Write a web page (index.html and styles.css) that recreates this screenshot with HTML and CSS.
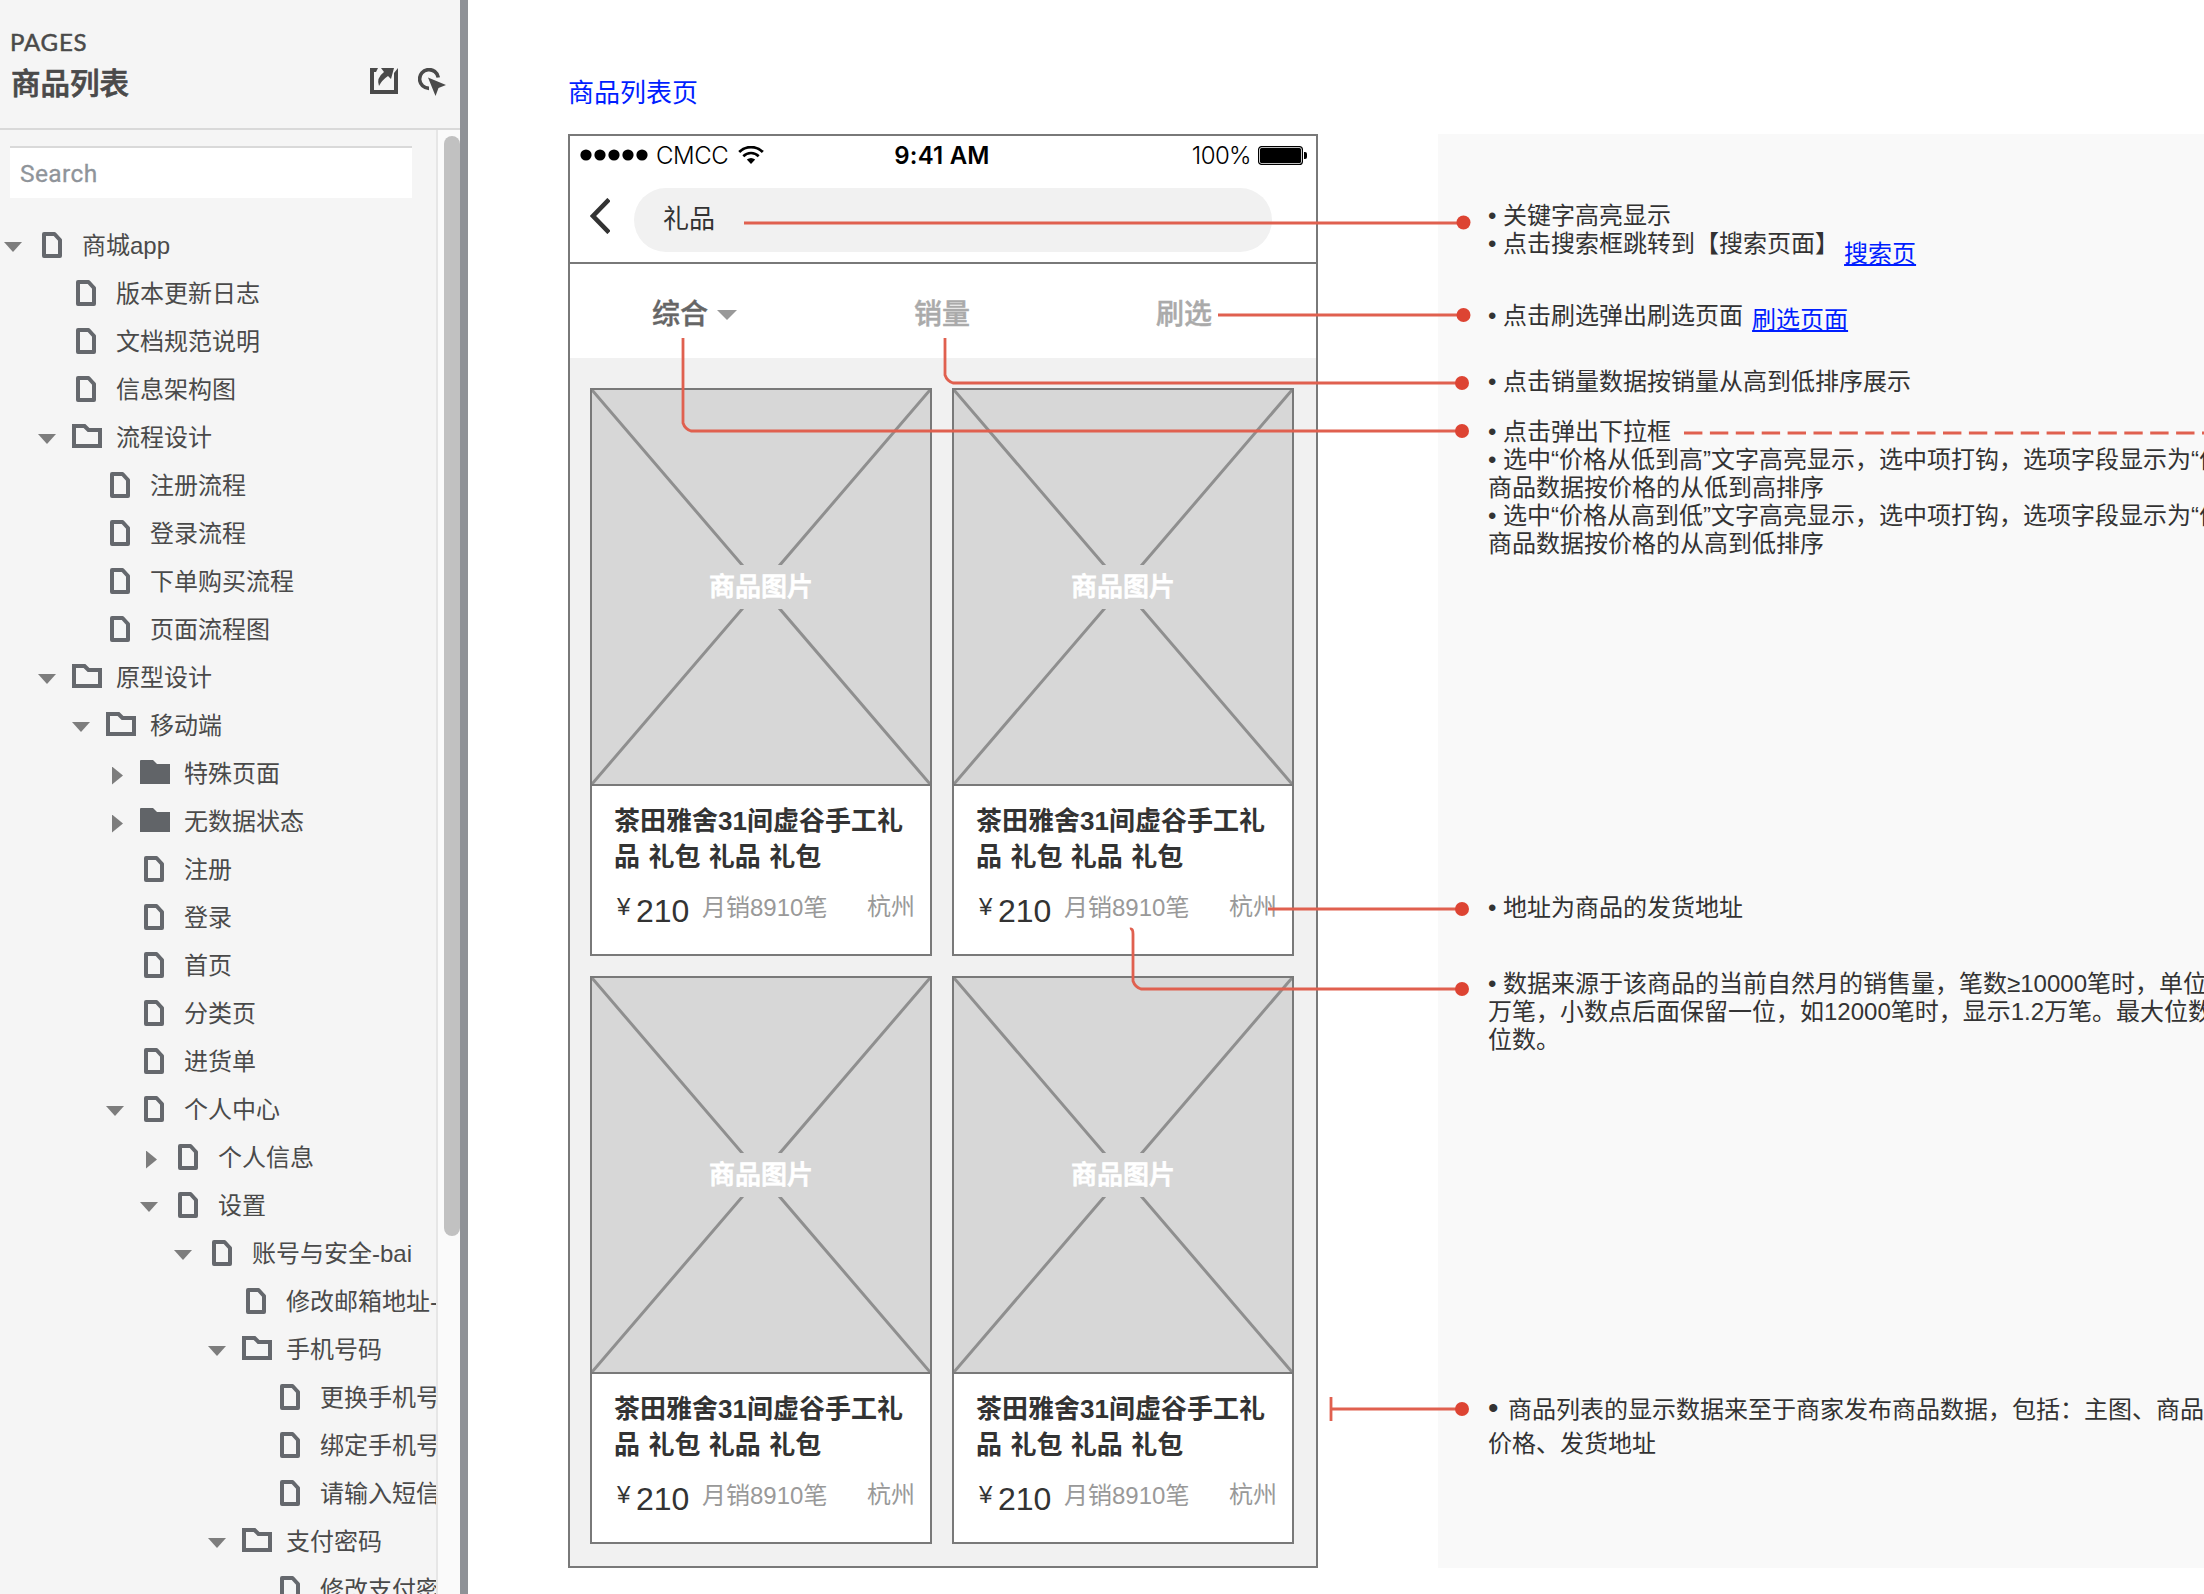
FILE: index.html
```
<!DOCTYPE html>
<html lang="zh-CN">
  <head>
    <meta charset="UTF-8" />
    <meta name="viewport" content="width=device-width, initial-scale=1.0" />
    <title>商品列表</title>
    <link rel="stylesheet" href="styles.css">
  </head>
  <body>
    <!-- Shared icons -->
    <svg class="sprite" width="0" height="0">
      <symbol id="file" viewBox="0 0 20 26">
        <path d="M2 2H12.5L18 8V24H2Z" fill="none" stroke="#65686d" stroke-width="4" stroke-linejoin="round" />
      </symbol>
      <symbol id="folder" viewBox="0 0 30 24">
        <path d="M2 2H12.5L16.5 6H28V22H2Z" fill="none" stroke="#65686d" stroke-width="4" />
      </symbol>
      <symbol id="folder-closed" viewBox="0 0 30 24">
        <path d="M0 1Q0 0 1 0H13L17 4H30V24H0Z" fill="#616468" />
      </symbol>
      <symbol id="cross" viewBox="0 0 338 394">
        <path d="M0 0L338 394M338 0L0 394" stroke="#8f8f8f" stroke-width="3" />
      </symbol>
    </svg>

    <aside class="sidebar">
      <header class="sidebar-header">
        <div>
          <div class="sidebar-label">PAGES</div>
          <h1>商品列表</h1>
        </div>
        <div class="sidebar-actions">
          <svg width="28" height="26" viewBox="0 0 28 26">
            <path d="M8 0H0V26H28V0L24 5V22H4V4H6Z" fill="#4a4a4a" />
            <path d="M11 0H24L21 11L18 8Q12 12 9 18Q6 10 14 4Z" fill="#4a4a4a" />
          </svg>
          <svg width="28" height="28" viewBox="0 0 28 28">
            <path d="M20.3 9.5A9.4 9.4 0 1 0 11 20.4" fill="none" stroke="#4a4a4a" stroke-width="3.6" />
            <path d="M10 9.5L28 17L20.5 20L17.5 28Z" fill="#4a4a4a" />
          </svg>
        </div>
      </header>

      <div class="sidebar-body">
        <div class="sidebar-scroll">
          <div class="search">Search</div>

          <ul class="tree">
            <li>
              <div class="row"><i class="arrow open"></i><svg class="file"><use href="#file" /></svg>商城app</div>
              <ul>
                <li><div class="row"><i class="arrow"></i><svg class="file"><use href="#file" /></svg>版本更新日志</div></li>
                <li><div class="row"><i class="arrow"></i><svg class="file"><use href="#file" /></svg>文档规范说明</div></li>
                <li><div class="row"><i class="arrow"></i><svg class="file"><use href="#file" /></svg>信息架构图</div></li>
                <li>
                  <div class="row"><i class="arrow open"></i><svg class="folder"><use href="#folder" /></svg>流程设计</div>
                  <ul>
                    <li><div class="row"><i class="arrow"></i><svg class="file"><use href="#file" /></svg>注册流程</div></li>
                    <li><div class="row"><i class="arrow"></i><svg class="file"><use href="#file" /></svg>登录流程</div></li>
                    <li><div class="row"><i class="arrow"></i><svg class="file"><use href="#file" /></svg>下单购买流程</div></li>
                    <li><div class="row"><i class="arrow"></i><svg class="file"><use href="#file" /></svg>页面流程图</div></li>
                  </ul>
                </li>
                <li>
                  <div class="row"><i class="arrow open"></i><svg class="folder"><use href="#folder" /></svg>原型设计</div>
                  <ul>
                    <li>
                      <div class="row"><i class="arrow open"></i><svg class="folder"><use href="#folder" /></svg>移动端</div>
                      <ul>
                        <li><div class="row"><i class="arrow closed"></i><svg class="folder"><use href="#folder-closed" /></svg>特殊页面</div></li>
                        <li><div class="row"><i class="arrow closed"></i><svg class="folder"><use href="#folder-closed" /></svg>无数据状态</div></li>
                        <li><div class="row"><i class="arrow"></i><svg class="file"><use href="#file" /></svg>注册</div></li>
                        <li><div class="row"><i class="arrow"></i><svg class="file"><use href="#file" /></svg>登录</div></li>
                        <li><div class="row"><i class="arrow"></i><svg class="file"><use href="#file" /></svg>首页</div></li>
                        <li><div class="row"><i class="arrow"></i><svg class="file"><use href="#file" /></svg>分类页</div></li>
                        <li><div class="row"><i class="arrow"></i><svg class="file"><use href="#file" /></svg>进货单</div></li>
                        <li>
                          <div class="row"><i class="arrow open"></i><svg class="file"><use href="#file" /></svg>个人中心</div>
                          <ul>
                            <li><div class="row"><i class="arrow closed"></i><svg class="file"><use href="#file" /></svg>个人信息</div></li>
                            <li>
                              <div class="row"><i class="arrow open"></i><svg class="file"><use href="#file" /></svg>设置</div>
                              <ul>
                                <li>
                                  <div class="row"><i class="arrow open"></i><svg class="file"><use href="#file" /></svg>账号与安全-bai</div>
                                  <ul>
                                    <li><div class="row"><i class="arrow"></i><svg class="file"><use href="#file" /></svg>修改邮箱地址-</div></li>
                                    <li>
                                      <div class="row"><i class="arrow open"></i><svg class="folder"><use href="#folder" /></svg>手机号码</div>
                                      <ul>
                                        <li><div class="row"><i class="arrow"></i><svg class="file"><use href="#file" /></svg>更换手机号</div></li>
                                        <li><div class="row"><i class="arrow"></i><svg class="file"><use href="#file" /></svg>绑定手机号</div></li>
                                        <li><div class="row"><i class="arrow"></i><svg class="file"><use href="#file" /></svg>请输入短信</div></li>
                                      </ul>
                                    </li>
                                    <li>
                                      <div class="row"><i class="arrow open"></i><svg class="folder"><use href="#folder" /></svg>支付密码</div>
                                      <ul>
                                        <li><div class="row"><i class="arrow"></i><svg class="file"><use href="#file" /></svg>修改支付密</div></li>
                                      </ul>
                                    </li>
                                  </ul>
                                </li>
                              </ul>
                            </li>
                          </ul>
                        </li>
                      </ul>
                    </li>
                  </ul>
                </li>
              </ul>
            </li>
          </ul>
        </div>
        <div class="scrollbar"><div class="scrollbar-thumb"></div></div>
      </div>
    </aside>
    <div class="splitter"></div>

    <main class="canvas">
      <h2>商品列表页</h2>
      <div class="board">
        <section class="phone">
          <div class="status-bar">
            <div class="status-left">
              <svg width="68" height="12" viewBox="0 0 68 12">
                <circle cx="6" cy="6" r="5.6" /><circle cx="20" cy="6" r="5.6" /><circle cx="34" cy="6" r="5.6" /><circle cx="48" cy="6" r="5.6" /><circle cx="62" cy="6" r="5.6" />
              </svg>
              <span class="carrier">CMCC</span>
              <svg width="26" height="18" viewBox="0 0 26 18">
                <path d="M1.2 5.9A17 17 0 0 1 24.8 5.9" fill="none" stroke="#000" stroke-width="2.8" />
                <path d="M5.3 10.2A11 11 0 0 1 20.7 10.2" fill="none" stroke="#000" stroke-width="2.6" />
                <path d="M13 18L8.8 13.6Q13 10.4 17.2 13.6Z" />
              </svg>
            </div>
            <div class="time">9:41 AM</div>
            <div class="status-right">
              <span class="percent">100%</span>
              <svg width="49" height="19" viewBox="0 0 49 19">
                <rect x="0.6" y="0.6" width="43.8" height="17.8" rx="3" fill="none" stroke="#000" stroke-width="1.2" />
                <rect x="2" y="2" width="41" height="15" rx="1.5" />
                <path d="M46 6H47Q49 6 49 8V11Q49 13 47 13H46Z" />
              </svg>
            </div>
          </div>
          <div class="nav-bar">
            <svg width="20" height="36" viewBox="0 0 20 36">
              <path d="M19 1.5L3 18L19 34.5" fill="none" stroke="#333" stroke-width="4.6" />
            </svg>
            <div class="keyword">礼品</div>
          </div>
          <div class="tabs">
            <span class="tab active">综合</span>
            <span class="tab">销量</span>
            <span class="tab">刷选</span>
          </div>
          <div class="goods">
            <article class="card">
              <div class="picture"><svg><use href="#cross" /></svg><span>商品图片</span></div>
              <h3>茶田雅舍31间虚谷手工礼<br />品 礼包 礼品 礼包</h3>
              <div class="info"><small>¥</small><b>210</b><span class="sales">月销8910笔</span><span class="place">杭州</span></div>
            </article>
            <article class="card">
              <div class="picture"><svg><use href="#cross" /></svg><span>商品图片</span></div>
              <h3>茶田雅舍31间虚谷手工礼<br />品 礼包 礼品 礼包</h3>
              <div class="info"><small>¥</small><b>210</b><span class="sales">月销8910笔</span><span class="place">杭州</span></div>
            </article>
            <article class="card">
              <div class="picture"><svg><use href="#cross" /></svg><span>商品图片</span></div>
              <h3>茶田雅舍31间虚谷手工礼<br />品 礼包 礼品 礼包</h3>
              <div class="info"><small>¥</small><b>210</b><span class="sales">月销8910笔</span><span class="place">杭州</span></div>
            </article>
            <article class="card">
              <div class="picture"><svg><use href="#cross" /></svg><span>商品图片</span></div>
              <h3>茶田雅舍31间虚谷手工礼<br />品 礼包 礼品 礼包</h3>
              <div class="info"><small>¥</small><b>210</b><span class="sales">月销8910笔</span><span class="place">杭州</span></div>
            </article>
          </div>
        </section>

        <section class="notes">
          <div class="note note-search">
            <p>• 关键字高亮显示<br />• 点击搜索框跳转到【搜索页面】</p>
            <a href="#">搜索页</a>
          </div>
          <div class="note note-filter">
            <p>• 点击刷选弹出刷选页面</p>
            <a href="#">刷选页面</a>
          </div>
          <div class="note note-sales">
            <p>• 点击销量数据按销量从高到低排序展示</p>
          </div>
          <div class="note note-sort">
            <p>
              • 点击弹出下拉框<br />
              • 选中“价格从低到高”文字高亮显示，选中项打钩，选项字段显示为“价<br />
              商品数据按价格的从低到高排序<br />
              • 选中“价格从高到低”文字高亮显示，选中项打钩，选项字段显示为“价<br />
              商品数据按价格的从高到低排序
            </p>
          </div>
          <div class="note note-place">
            <p>• 地址为商品的发货地址</p>
          </div>
          <div class="note note-count">
            <p>
              • 数据来源于该商品的当前自然月的销售量，笔数≥10000笔时，单位<br />
              万笔，小数点后面保留一位，如12000笔时，显示1.2万笔。最大位数<br />
              位数。
            </p>
          </div>
          <div class="note note-list">
            <p>
              <span class="bullet">•</span>商品列表的显示数据来至于商家发布商品数据，包括：主图、商品<br />
              价格、发货地址
            </p>
          </div>
        </section>
      </div>

      <!-- Connector lines from the phone to the notes -->
      <svg class="connectors" viewBox="468 0 1736 1594">
        <g class="lines">
          <path d="M744 223H1463" />
          <path d="M1218 315H1463" />
          <path d="M945 338V375Q947 381 953 383H1462" />
          <path d="M683 338V423Q685 429 691 431H1462" />
          <path d="M1268 909H1462" />
          <path d="M1130 929Q1133 928 1133 934V981Q1135 987 1141 989H1462" />
          <path d="M1331 1409H1462" />
          <path d="M1331 1397V1421" />
          <path d="M1684 433H2204" stroke-dasharray="18.4 7.5" />
        </g>
        <g class="dots">
          <circle cx="1463.5" cy="222.5" r="7" />
          <circle cx="1463.5" cy="315" r="7" />
          <circle cx="1462" cy="383" r="7" />
          <circle cx="1462" cy="431" r="7" />
          <circle cx="1462" cy="909" r="7" />
          <circle cx="1462" cy="989" r="7" />
          <circle cx="1462" cy="1409" r="7" />
        </g>
      </svg>
    </main>
  </body>
</html>
```
FILE: styles.css
```
/* Basic Reset */
* {
  box-sizing: border-box;
  margin: 0;
  padding: 0;
}

body {
  display: flex;
  height: 1594px;
  overflow: hidden;
  background-color: #fff;
  color: #333;
  font-family: "Liberation Sans", "Noto Sans CJK SC", sans-serif;
  font-size: 24px;
}

svg {
  display: block;
  flex: none;
}

.sprite {
  position: absolute;
}

/* Sidebar */
.sidebar {
  display: flex;
  flex-direction: column;
  flex: none;
  width: 460px;
  background-color: #f5f5f5;
  color: #4a4a4a;
}

.sidebar-header {
  display: flex;
  justify-content: space-between;
  height: 130px;
  padding: 26px 14px 0 10px;
  border-bottom: 2px solid #d9d9d9;
}

.sidebar-label {
  font-family: Lato, sans-serif;
  font-size: 24px;
  line-height: 31px;
  letter-spacing: 0.8px;
  -webkit-text-stroke: 0.5px;
}

h1 {
  padding-left: 1px;
  font-size: 29.5px;
  font-weight: 500;
  line-height: 54px;
  -webkit-text-stroke: 0.7px;
}

.sidebar-actions {
  display: flex;
  gap: 20px;
  padding-top: 42px;
}

.sidebar-body {
  display: flex;
  flex: 1;
  min-height: 0;
}

.sidebar-scroll {
  flex: 1;
  min-width: 0;
  padding-top: 16px;
  overflow: hidden;
}

.search {
  width: 402px;
  height: 52px;
  margin-left: 10px;
  padding-left: 10px;
  border-top: 2px solid #d9d9d9;
  background-color: #fff;
  color: #8f949a;
  font-family: Roboto, sans-serif;
  font-size: 24.5px;
  line-height: 51px;
  letter-spacing: 0.4px;
  -webkit-text-stroke: 0.3px;
}

.scrollbar {
  width: 24px;
  padding: 6px 0 0 6px;
  border-left: 2px solid #e6e6e6;
  background-color: #fafafa;
}

.scrollbar-thumb {
  width: 16px;
  height: 1100px;
  border-radius: 8px;
  background-color: #c1c1c1;
}

.splitter {
  flex: none;
  width: 8px;
  background-color: #8f9297;
}

/* Page tree */
.tree {
  padding: 23px 0 0 4px;
}

.tree ul {
  padding-left: 34px;
}

.tree li {
  list-style: none;
}

.row {
  display: flex;
  align-items: center;
  height: 48px;
  padding-bottom: 3px;
  white-space: nowrap;
}

.arrow {
  flex: none;
  width: 18px;
  margin-right: 16px;
}

.arrow.open {
  height: 10px;
  margin-top: 7px;
  background-color: #7d7d7d;
  clip-path: polygon(0 0, 100% 0, 50% 100%);
}

.arrow.closed {
  width: 11px;
  height: 18px;
  margin: 8px 17px 0 6px;
  background-color: #7d7d7d;
  clip-path: polygon(0 0, 100% 50%, 0 100%);
}

.file {
  width: 20px;
  height: 26px;
  margin: 3px 20px 0 4px;
}

.folder {
  width: 30px;
  height: 24px;
  margin: 1px 14px 0 0;
}

/* Canvas */
.canvas {
  position: relative;
  flex: 1;
  min-width: 0;
  padding: 74px 0 0 100px;
  overflow: hidden;
}

h2 {
  margin-bottom: 22px;
  color: #001eff;
  font-size: 26px;
  font-weight: 400;
  line-height: 38px;
}

.board {
  display: flex;
  gap: 120px;
  height: 1434px;
}

/* Phone */
.phone {
  flex: none;
  width: 750px;
  border: 2px solid #797979;
  background-color: #f1f1f1;
}

.status-bar {
  display: grid;
  grid-template-columns: 1fr auto 1fr;
  align-items: center;
  height: 40px;
  padding: 0 9px 2px 10px;
  background-color: #fff;
  color: #000;
  font-family: Inter, sans-serif;
  font-size: 24px;
}

.status-left,
.status-right {
  display: flex;
  align-items: center;
}

.status-right {
  justify-content: flex-end;
  gap: 7px;
}

.carrier {
  margin: 1px 10px 0 8px;
  font-weight: 300;
  letter-spacing: -0.4px;
}

.time {
  padding: 1px 3px 0 0;
  font-weight: 600;
  letter-spacing: 0.2px;
}

.percent {
  margin-top: 1px;
  font-weight: 300;
  letter-spacing: -0.6px;
}

.nav-bar {
  display: flex;
  align-items: center;
  gap: 24px;
  height: 88px;
  padding: 0 20px 0 20px;
  border-bottom: 2px solid #797979;
  background-color: #fff;
}

.nav-bar svg {
  margin-bottom: 6px;
}

.keyword {
  width: 638px;
  height: 64px;
  margin-top: 2px;
  padding-left: 29px;
  border-radius: 32px;
  background-color: #f1f1f1;
  font-size: 26px;
  line-height: 62px;
}

.tabs {
  display: flex;
  gap: 186px;
  height: 94px;
  padding-left: 82px;
  background-color: #fff;
  color: #aaa;
  font-size: 28px;
  font-weight: 500;
  line-height: 102px;
  white-space: nowrap;
  -webkit-text-stroke: 0.4px;
}

.tab.active {
  display: flex;
  gap: 9px;
  width: 76px;
  color: #666;
}

.tab.active::after {
  content: "";
  flex: none;
  width: 20px;
  height: 10px;
  margin-top: 46px;
  background-color: #999;
  clip-path: polygon(0 0, 100% 0, 50% 100%);
}

/* Goods cards */
.goods {
  display: grid;
  grid-template-columns: 342px 342px;
  grid-auto-rows: 568px;
  gap: 20px;
  padding: 30px 20px 0;
}

.card {
  border: 2px solid #797979;
  background-color: #fff;
}

.picture {
  display: grid;
  place-items: center;
  height: 396px;
  border-bottom: 2px solid #797979;
  background-color: #d7d7d7;
}

.picture svg {
  grid-area: 1 / 1;
  width: 338px;
  height: 394px;
}

.picture span {
  grid-area: 1 / 1;
  padding: 0 6px;
  background-color: #d7d7d7;
  color: #fff;
  font-size: 26px;
  font-weight: 500;
  line-height: 44px;
  -webkit-text-stroke: 0.8px;
  z-index: 1;
}

h3 {
  padding: 17px 0 0 22px;
  font-size: 26px;
  font-weight: 700;
  line-height: 36px;
  word-spacing: 1.2px;
}

.info {
  display: flex;
  padding: 16px 15px 0 25px;
  color: #999;
  line-height: 32px;
}

.info small {
  width: 19px;
  color: #333;
  font-size: 24px;
}

.info b {
  width: 66px;
  color: #333;
  font-size: 32px;
  font-weight: 400;
  line-height: 40px;
}

.sales {
  padding-top: 1px;
}

.place {
  margin: 0 0 0 auto;
}

/* Notes */
.notes {
  flex: 1;
  min-width: 0;
  padding: 68px 0 0 50px;
  background-color: #f9f9f9;
  line-height: 28px;
  white-space: nowrap;
  overflow: hidden;
}

.note {
  display: flex;
  align-items: flex-end;
}

.note a {
  color: #001eff;
  text-underline-offset: 2px;
  text-decoration-thickness: 2px;
}

.note-search a {
  margin: 0 0 -10px 5px;
}

.note-filter {
  margin-top: 44px;
}

.note-filter a {
  margin: 0 0 -4px 9px;
}

.note-sales {
  margin-top: 38px;
}

.note-sort {
  margin-top: 22px;
}

.note-place {
  margin-top: 336px;
}

.note-count {
  margin-top: 48px;
}

.note-list {
  margin-top: 339px;
  line-height: 34px;
}

.bullet {
  display: inline-block;
  width: 20px;
  font-size: 30px;
  line-height: 24px;
}

/* Connector lines */
.connectors {
  position: absolute;
  top: 0;
  left: 0;
  width: 1736px;
  height: 1594px;
}

.lines {
  fill: none;
  stroke: #e0604f;
  stroke-width: 2.8;
}

.dots {
  fill: #dd4433;
}
```
